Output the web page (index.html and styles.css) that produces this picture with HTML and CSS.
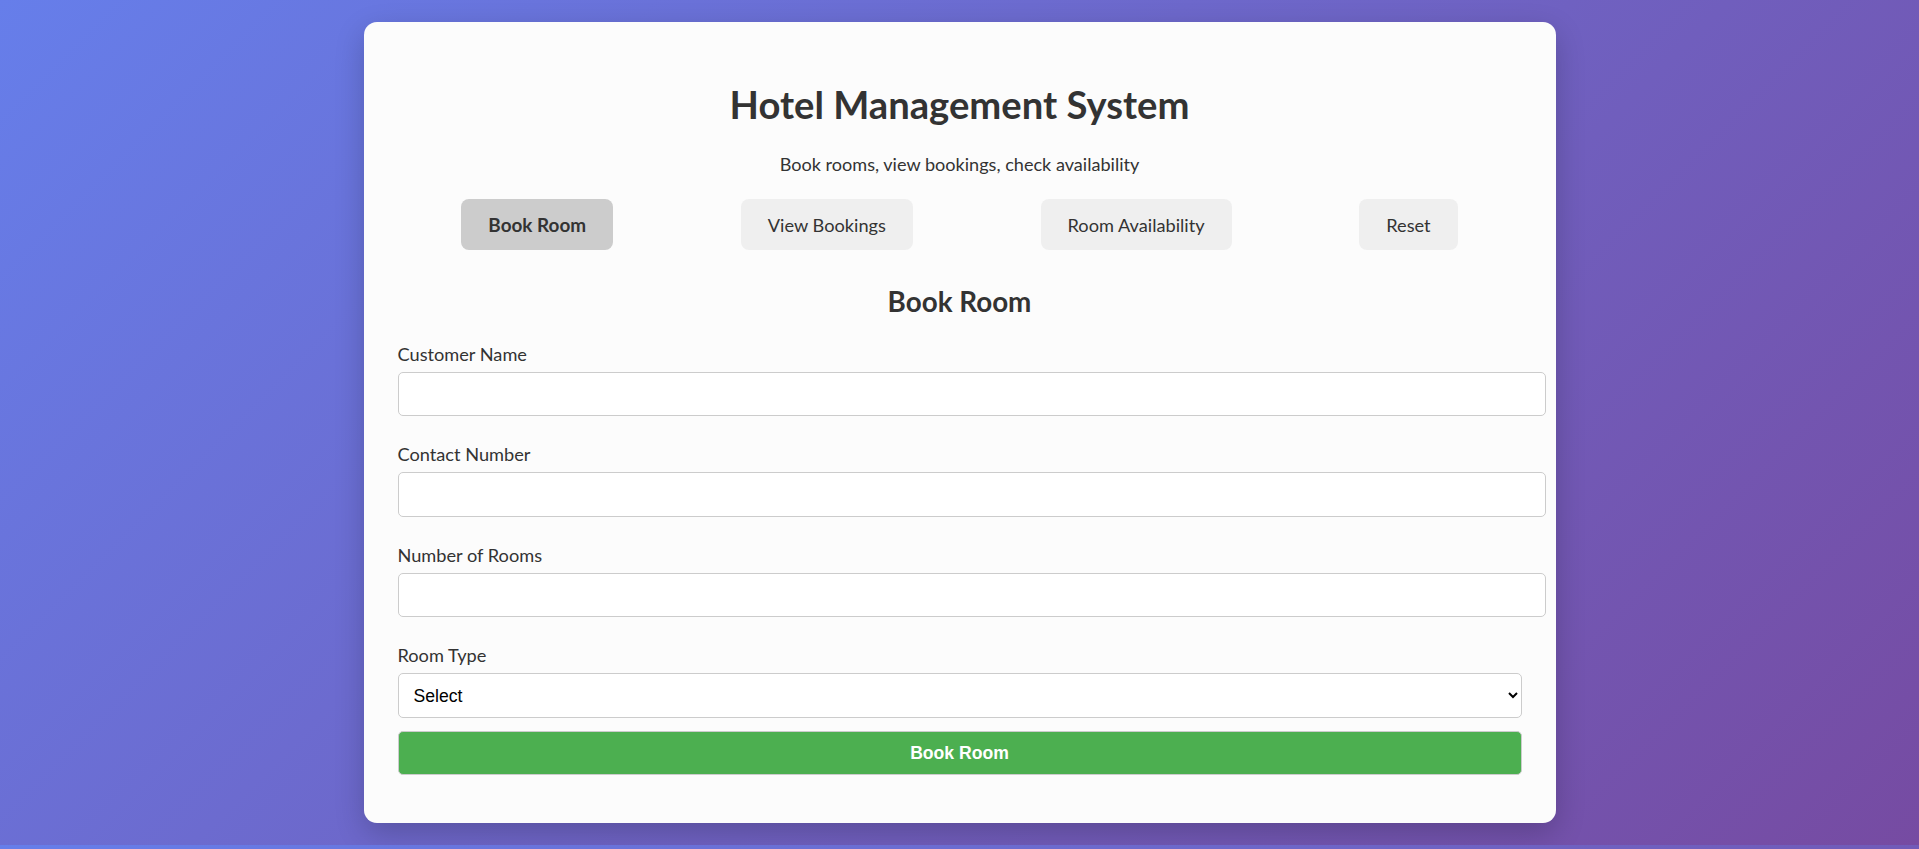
FILE: index.html
```html
<!DOCTYPE html>
<html lang="en">
<head>
<meta charset="utf-8">
<title>Hotel Management System</title>
<link rel="stylesheet" href="styles.css">
</head>
<body>
<div class="card">
  <h1 class="title">Hotel Management System</h1>
  <p class="subtitle">Book rooms, view bookings, check availability</p>
  <nav class="tabs">
    <button class="tab active">Book Room</button>
    <button class="tab">View Bookings</button>
    <button class="tab">Room Availability</button>
    <button class="tab">Reset</button>
  </nav>
  <h2 class="section-title">Book Room</h2>
  <form class="form">
    <div class="group">
      <label class="label">Customer Name</label>
      <input class="field" type="text">
    </div>
    <div class="group">
      <label class="label">Contact Number</label>
      <input class="field" type="text">
    </div>
    <div class="group">
      <label class="label">Number of Rooms</label>
      <input class="field" type="text">
    </div>
    <div class="group last">
      <label class="label">Room Type</label>
      <select class="select">
        <option>Select</option>
        <option>Single</option>
        <option>Double</option>
        <option>Suite</option>
      </select>
    </div>
    <button class="submit" type="button">Book Room</button>
  </form>
</div>
</body>
</html>
```

FILE: styles.css
```css
html {
  margin: 0;
}
body {
  margin: 0;
  padding: 22px;
  background: linear-gradient(135deg, #667eea 0%, #764ba2 100%);
  font-family: Lato, "Open Sans", sans-serif;
  color: #333;
}
.card {
  width: 1192px;
  box-sizing: border-box;
  margin: 0 auto;
  padding: 34px 34px 35px;
  background: #fcfcfc;
  border-radius: 13px;
  box-shadow: 0 10px 30px rgba(0, 0, 0, 0.2);
}
.title {
  margin: 26px 0 0;
  font-size: 38.2px;
  line-height: 44px;
  font-weight: 700;
  text-align: center;
}
.subtitle {
  margin: 26px 0 0;
  font-size: 18.1px;
  line-height: 24px;
  text-align: center;
}
.tabs {
  display: flex;
  justify-content: space-around;
  margin-top: 23px;
}
.tab {
  font-family: Lato, "Open Sans", sans-serif;
  font-size: 18.2px;
  line-height: 24px;
  color: #333;
  background: #efefef;
  border: none;
  border-radius: 8px;
  padding: 13.5px 27px;
  cursor: pointer;
}
.tab.active {
  background: #cccccc;
  font-weight: 700;
  font-size: 18.9px;
}
.section-title {
  margin: 36px 0 0;
  font-size: 27.8px;
  line-height: 32px;
  font-weight: 700;
  text-align: center;
}
.form {
  margin: 24px 0 13px;
}
.group {
  margin-bottom: 26px;
}
.group.last {
  margin-bottom: 13px;
}
.label {
  display: block;
  font-size: 18.2px;
  line-height: 24px;
  margin-bottom: 6px;
}
.field {
  display: block;
  width: 100%;
  height: 20.3px;
  padding: 11px;
  border: 1px solid #ccc;
  border-radius: 5px;
  background: #fff;
  font-family: "Liberation Sans", Arial, sans-serif;
  font-size: 17.6px;
}
.select {
  display: block;
  width: 100%;
  height: 45.6px;
  box-sizing: border-box;
  padding: 0 11px;
  border: 1px solid #ccc;
  border-radius: 5px;
  background: #fff;
  color: #000;
  font-family: "Liberation Sans", Arial, sans-serif;
  font-size: 17.6px;
}
.submit {
  display: block;
  width: 100%;
  height: 44px;
  box-sizing: border-box;
  border: 1px solid #ccc;
  border-radius: 5px;
  background: #4caf50;
  color: #fff;
  font-family: "Liberation Sans", Arial, sans-serif;
  font-size: 17.6px;
  font-weight: 700;
  cursor: pointer;
}
```
